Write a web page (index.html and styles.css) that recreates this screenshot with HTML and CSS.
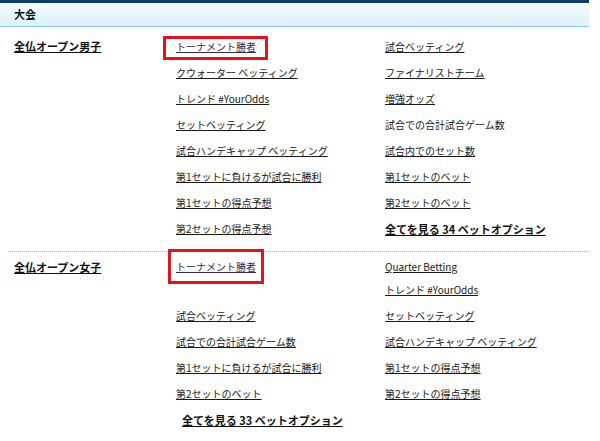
FILE: index.html
```html
<!DOCTYPE html>
<html lang="ja">
<head>
<meta charset="utf-8">
<title>大会</title>
<link rel="stylesheet" href="styles.css">
</head>
<body>
<div class="panel">
  <div class="panel-head">大会</div>

  <section class="event">
    <div class="event-name"><a href="#">全仏オープン男子</a></div>
    <ul class="markets">
      <li><a href="#" class="visited flag flag--a">トーナメント勝者</a></li>
      <li><a href="#">試合ベッティング</a></li>
      <li><a href="#">クウォーター ベッティング</a></li>
      <li><a href="#">ファイナリストチーム</a></li>
      <li><a href="#">トレンド #YourOdds</a></li>
      <li><a href="#">増強オッズ</a></li>
      <li><a href="#">セットベッティング</a></li>
      <li><span class="plain">試合での合計試合ゲーム数</span></li>
      <li><a href="#">試合ハンデキャップ ベッティング</a></li>
      <li><a href="#">試合内でのセット数</a></li>
      <li><a href="#">第1セットに負けるが試合に勝利</a></li>
      <li><a href="#">第1セットのベット</a></li>
      <li><a href="#">第1セットの得点予想</a></li>
      <li><a href="#">第2セットのベット</a></li>
      <li><a href="#">第2セットの得点予想</a></li>
      <li><a href="#" class="all">全てを見る 34 ベットオプション</a></li>
    </ul>
  </section>

  <section class="event event--second">
    <div class="event-name"><a href="#">全仏オープン女子</a></div>
    <ul class="markets markets--second">
      <li><a href="#" class="visited flag flag--b">トーナメント勝者</a></li>
      <li><a href="#">Quarter Betting</a></li>
      <li></li>
      <li><a href="#">トレンド #YourOdds</a></li>
      <li><a href="#">試合ベッティング</a></li>
      <li><a href="#">セットベッティング</a></li>
      <li><a href="#">試合での合計試合ゲーム数</a></li>
      <li><a href="#">試合ハンデキャップ ベッティング</a></li>
      <li><a href="#">第1セットに負けるが試合に勝利</a></li>
      <li><a href="#">第1セットの得点予想</a></li>
      <li><a href="#">第2セットのベット</a></li>
      <li><a href="#">第2セットの得点予想</a></li>
      <li><a href="#" class="all all--shift">全てを見る 33 ベットオプション</a></li>
    </ul>
  </section>
</div>
</body>
</html>
```

FILE: styles.css
```css
html, body {
  margin: 0;
  padding: 0;
  background: #ffffff;
}

body {
  font-family: "Noto Sans CJK JP", "Noto Sans", "Liberation Sans", sans-serif;
  color: #1a1a1a;
}

.panel {
  width: 589px;
}

.panel-head {
  height: 23px;
  line-height: 23px;
  border-top: 3px solid #0c3c68;
  border-bottom: 1px solid #8ecbe0;
  background: linear-gradient(#f4fbfe, #dcf0f8);
  padding-left: 14px;
  font-size: 11px;
  font-weight: bold;
  color: #111;
}

.event {
  display: grid;
  grid-template-columns: 162px 1fr;
  margin-left: 8px;
  padding: 7px 0 9px 6px;
  border-bottom: 1px dotted #8ac6df;
}

.event--second {
  padding-top: 5px;
  border-bottom: none;
}

.event-name {
  line-height: 24px;
  font-size: 11px;
  font-weight: bold;
}

.event--second .event-name {
  line-height: 20px;
}

.event-name a {
  color: #111;
  text-decoration: underline;
}

.markets {
  list-style: none;
  margin: 0;
  padding: 0;
  display: grid;
  grid-template-columns: 209px 1fr;
  grid-auto-rows: 26px;
}

.markets--second {
  grid-template-rows: 20px;
}

.markets li {
  font-size: 10px;
  line-height: 26px;
  white-space: nowrap;
}

.markets--second li:nth-child(-n+2) {
  line-height: 20px;
}

.markets a {
  color: #1a1a1a;
  text-decoration: underline;
}

.markets a.visited {
  color: #34294f;
}

.plain {
  color: #1a1a1a;
}

.markets a.all {
  font-size: 11px;
  font-weight: bold;
  color: #111;
}

.all--shift {
  margin-left: 6px;
}

.flag {
  position: relative;
}

.flag::after {
  content: "";
  position: absolute;
  border: 3px solid #e3141c;
  pointer-events: none;
}

.flag--a::after {
  left: -13px;
  right: -12px;
  top: -3px;
  bottom: -6px;
}

.flag--b::after {
  left: -8px;
  right: -8px;
  top: -10px;
  bottom: -10px;
}
```
